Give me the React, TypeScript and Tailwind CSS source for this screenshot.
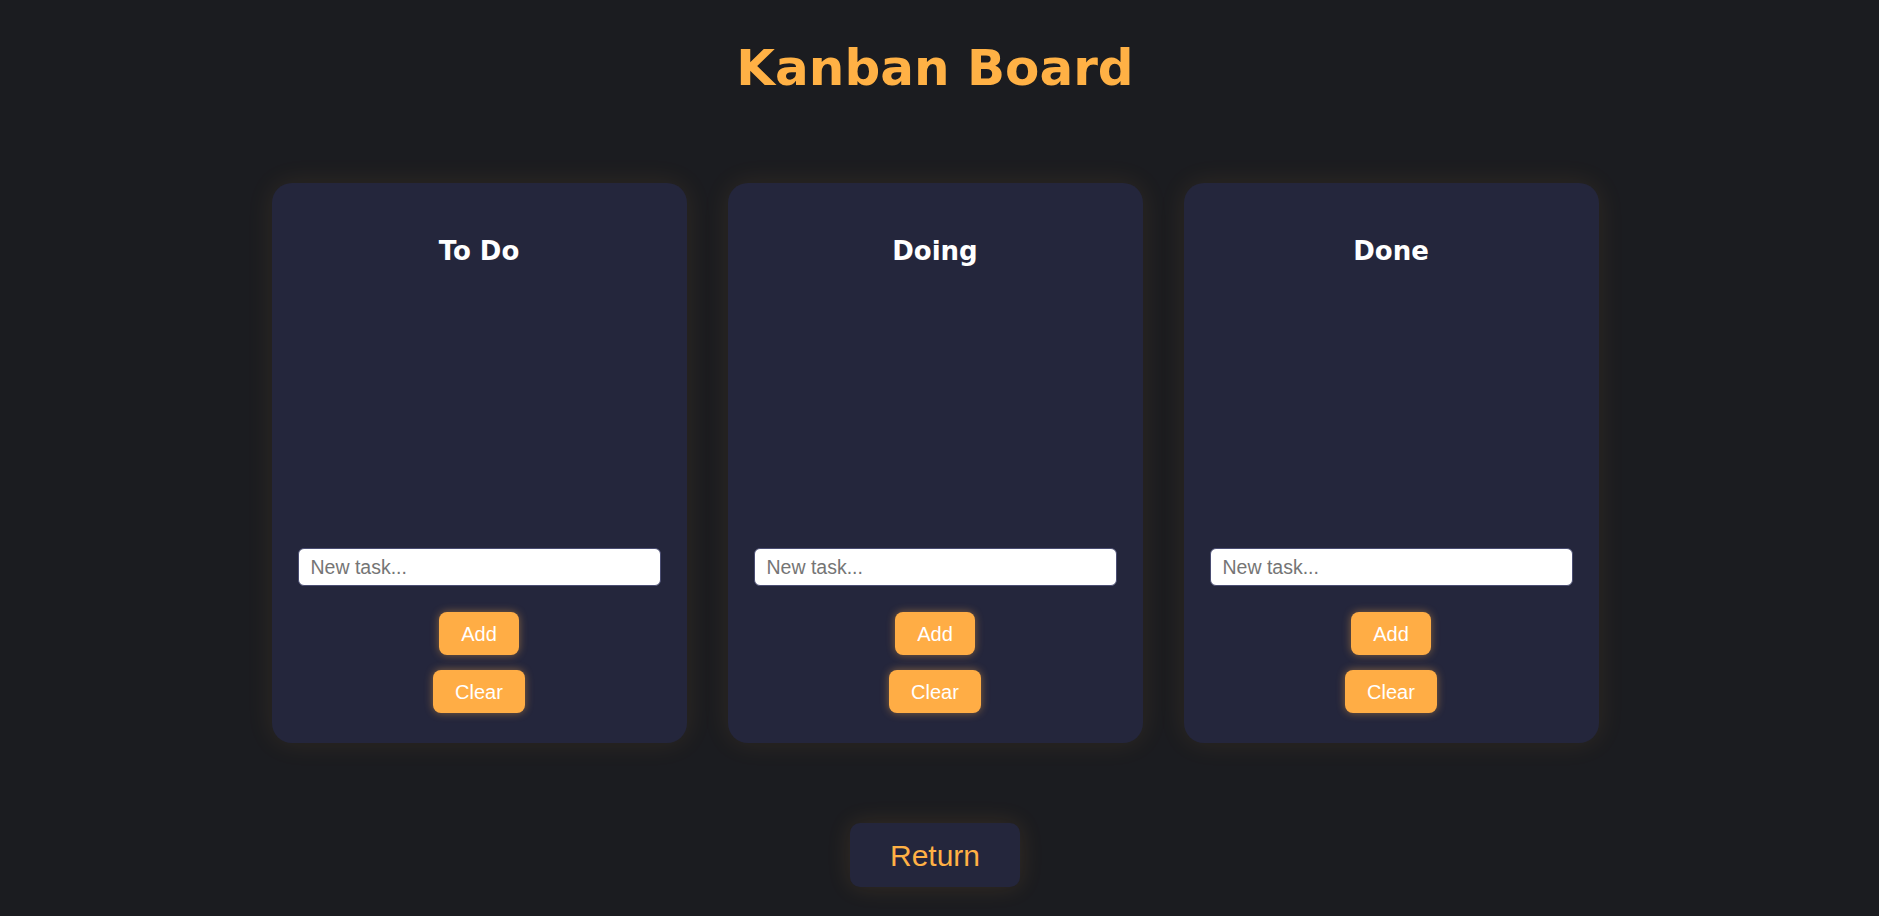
import React from "react";

const columns = ["To Do", "Doing", "Done"];

function Column({ title }: { title: string }) {
  return (
    <section className="flex h-[560px] w-[415px] flex-col rounded-[20px] bg-[#24263c] px-[26px] pb-[30px] pt-[26px] shadow-[0_0_28px_rgba(255,173,69,0.09)]">
      <h2 className="mt-[26px] text-center text-[26px] font-bold leading-[33px] text-white [font-family:'DejaVu_Sans',sans-serif]">
        {title}
      </h2>
      <div className="flex-1" />
      <input
        type="text"
        placeholder="New task..."
        className="h-[38px] w-full rounded-[6px] border border-[#4a4d72] bg-white px-[12px] text-[19.5px] text-black outline-none placeholder:text-[#757575] [font-family:'Liberation_Sans',Arial,sans-serif]"
      />
      <div className="mt-[26px] flex flex-col items-center gap-[15px]">
        <button className="h-[43px] rounded-[8px] bg-[#ffad45] px-[22px] text-[20px] text-white shadow-[0_0_8px_rgba(255,173,69,0.45)] [font-family:'Liberation_Sans',Arial,sans-serif]">
          Add
        </button>
        <button className="h-[43px] rounded-[8px] bg-[#ffad45] px-[22px] text-[20px] text-white shadow-[0_0_8px_rgba(255,173,69,0.45)] [font-family:'Liberation_Sans',Arial,sans-serif]">
          Clear
        </button>
      </div>
    </section>
  );
}

export default function App() {
  return (
    <div className="min-h-[916px] w-full bg-[#1b1c20] pr-[9px]">
      <h1 className="pt-[43px] text-center text-[50px] font-bold leading-none text-[#ffb145] [font-family:'DejaVu_Sans',sans-serif]">
        Kanban Board
      </h1>
      <div className="mt-[90px] flex justify-center gap-[41px]">
        {columns.map((c) => (
          <Column key={c} title={c} />
        ))}
      </div>
      <div className="mt-[80px] flex justify-center">
        <button className="h-[64px] rounded-[10px] bg-[#24263c] px-[40px] text-[30px] text-[#ffb145] shadow-[0_0_24px_rgba(255,173,69,0.12)] [font-family:'Liberation_Sans',Arial,sans-serif]">
          Return
        </button>
      </div>
    </div>
  );
}
